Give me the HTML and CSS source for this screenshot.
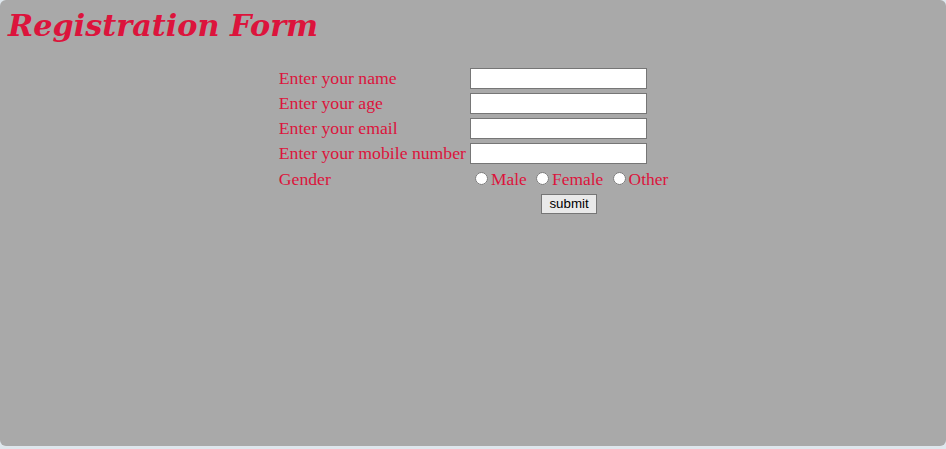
FILE: index.html
```html
<!DOCTYPE html>
<html>
<head>
<meta charset="utf-8">
<link rel="stylesheet" href="styles.css">
</head>
<body>
<div class="panel">
  <h1 class="title">Registration Form</h1>
  <form class="form">
    <table class="form-table">
      <tr><td class="label">Enter your name</td><td><input type="text" class="field"></td></tr>
      <tr><td class="label">Enter your age</td><td><input type="text" class="field"></td></tr>
      <tr><td class="label">Enter your email</td><td><input type="text" class="field"></td></tr>
      <tr><td class="label">Enter your mobile number</td><td><input type="text" class="field"></td></tr>
      <tr class="gender-row"><td class="label">Gender</td><td class="radios"><input type="radio" name="g">Male <input type="radio" name="g">Female <input type="radio" name="g">Other</td></tr>
      <tr><td></td><td class="center"><button type="button" class="submit">submit</button></td></tr>
    </table>
  </form>
</div>
</body>
</html>
```
FILE: styles.css
```css
html, body {
  margin: 0;
  padding: 0;
  background: #dfe7ed;
}
.panel {
  height: 446px;
  background: #a9a9a9;
  border-radius: 6px;
  overflow: hidden;
  font-family: "Liberation Serif", serif;
  color: #dc143c;
  padding: 1px 8px 0;
  box-sizing: border-box;
}
.title {
  font-family: "DejaVu Serif", serif;
  font-style: italic;
  font-weight: bold;
  font-size: 30.3px;
  margin: 6px 0 21px;
  line-height: 37px;
}
.form {
  padding-left: 1px;
}
.form-table {
  margin: 0 auto;
  font-size: 17.7px;
}
.form-table td {
  padding: 1px;
  line-height: 21px;
}
.gender-row td {
  height: 22px;
}
.radios {
  font-size: 17.4px;
}
.field {
  width: 177px;
  height: 21px;
  box-sizing: border-box;
  border: 1px solid #767676;
  background: #fff;
  margin: 0;
  padding: 1px 2px;
  vertical-align: top;
}
.radios input {
  margin: 3px 3px 0 5px;
  width: 13px;
  height: 13px;
}
.center {
  text-align: center;
}
.submit {
  font-family: "Liberation Sans", Arial, sans-serif;
  font-size: 13.33px;
  line-height: 16px;
  color: #000;
  background: #e9e9e9;
  border: 1px solid #767676;
  border-radius: 0;
  padding: 1px 7px;
  height: 20px;
  margin: 0;
  vertical-align: top;
}
```
